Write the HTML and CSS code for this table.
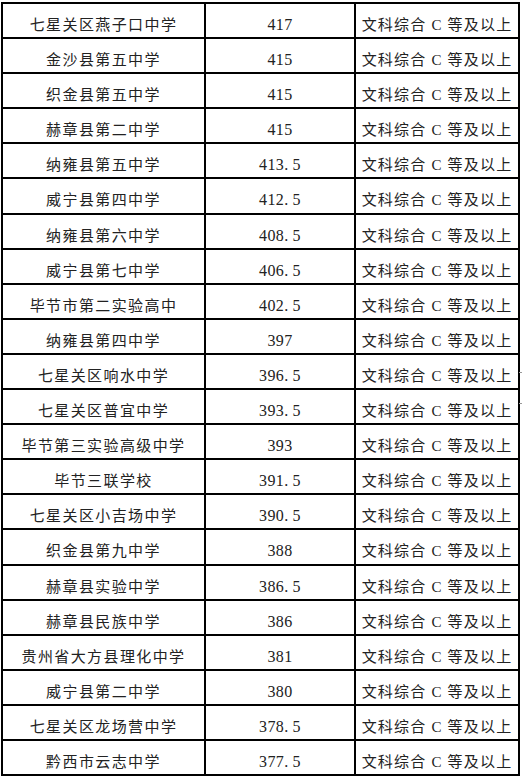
FILE: index.html
```html
<!DOCTYPE html>
<html lang="zh-CN">
<head>
<meta charset="utf-8">
<link rel="stylesheet" href="styles.css">
</head>
<body>
<div class="page">
<table class="score">
<colgroup><col class="c1"><col class="c2"><col class="c3"></colgroup>
<tbody>
<tr><td>七星关区燕子口中学</td><td class="num">417</td><td class="req">文科综合 C 等及以上</td></tr>
<tr><td>金沙县第五中学</td><td class="num">415</td><td class="req">文科综合 C 等及以上</td></tr>
<tr><td>织金县第五中学</td><td class="num">415</td><td class="req">文科综合 C 等及以上</td></tr>
<tr><td>赫章县第二中学</td><td class="num">415</td><td class="req">文科综合 C 等及以上</td></tr>
<tr><td>纳雍县第五中学</td><td class="num">413<span class="pt">.</span>5</td><td class="req">文科综合 C 等及以上</td></tr>
<tr><td>威宁县第四中学</td><td class="num">412<span class="pt">.</span>5</td><td class="req">文科综合 C 等及以上</td></tr>
<tr><td>纳雍县第六中学</td><td class="num">408<span class="pt">.</span>5</td><td class="req">文科综合 C 等及以上</td></tr>
<tr><td>威宁县第七中学</td><td class="num">406<span class="pt">.</span>5</td><td class="req">文科综合 C 等及以上</td></tr>
<tr><td>毕节市第二实验高中</td><td class="num">402<span class="pt">.</span>5</td><td class="req">文科综合 C 等及以上</td></tr>
<tr><td>纳雍县第四中学</td><td class="num">397</td><td class="req">文科综合 C 等及以上</td></tr>
<tr><td>七星关区响水中学</td><td class="num">396<span class="pt">.</span>5</td><td class="req">文科综合 C 等及以上</td></tr>
<tr><td>七星关区普宜中学</td><td class="num">393<span class="pt">.</span>5</td><td class="req">文科综合 C 等及以上</td></tr>
<tr><td>毕节第三实验高级中学</td><td class="num">393</td><td class="req">文科综合 C 等及以上</td></tr>
<tr><td>毕节三联学校</td><td class="num">391<span class="pt">.</span>5</td><td class="req">文科综合 C 等及以上</td></tr>
<tr><td>七星关区小吉场中学</td><td class="num">390<span class="pt">.</span>5</td><td class="req">文科综合 C 等及以上</td></tr>
<tr><td>织金县第九中学</td><td class="num">388</td><td class="req">文科综合 C 等及以上</td></tr>
<tr><td>赫章县实验中学</td><td class="num">386<span class="pt">.</span>5</td><td class="req">文科综合 C 等及以上</td></tr>
<tr><td>赫章县民族中学</td><td class="num">386</td><td class="req">文科综合 C 等及以上</td></tr>
<tr><td>贵州省大方县理化中学</td><td class="num">381</td><td class="req">文科综合 C 等及以上</td></tr>
<tr><td>威宁县第二中学</td><td class="num">380</td><td class="req">文科综合 C 等及以上</td></tr>
<tr><td>七星关区龙场营中学</td><td class="num">378<span class="pt">.</span>5</td><td class="req">文科综合 C 等及以上</td></tr>
<tr><td>黔西市云志中学</td><td class="num">377<span class="pt">.</span>5</td><td class="req">文科综合 C 等及以上</td></tr>
</tbody>
</table>
<span class="tick tick-a"></span>
<span class="tick tick-b"></span>
</div>
</body>
</html>
```
FILE: styles.css
```css
html, body {
  margin: 0;
  padding: 0;
  background: #fff;
}
.page {
  position: relative;
  padding: 2px 0 0 1px;
}
.score {
  border-collapse: collapse;
  table-layout: fixed;
  width: 518px;
  font-family: "Liberation Serif", "Noto Sans CJK SC", serif;
  font-size: 15px;
  color: #222;
}
.c1 { width: 203px; }
.c2 { width: 150px; }
.c3 { width: 164px; }
.score td {
  border: 2px solid #000;
  height: 35.1px;
  box-sizing: border-box;
  padding: 11px 0 0 0;
  line-height: 20px;
  text-align: center;
  letter-spacing: 1.4px;
  white-space: nowrap;
  vertical-align: top;
}
.score td.req {
  letter-spacing: 1.2px;
}
.score td.num {
  font-size: 16px;
  letter-spacing: 0.4px;
}
.pt {
  display: inline-block;
  width: 8.4px;
  text-align: left;
}
.tick {
  position: absolute;
  left: 519px;
  width: 3px;
  height: 1px;
  background: #999;
}
.tick-a { top: 372px; }
.tick-b { top: 403px; }
```
